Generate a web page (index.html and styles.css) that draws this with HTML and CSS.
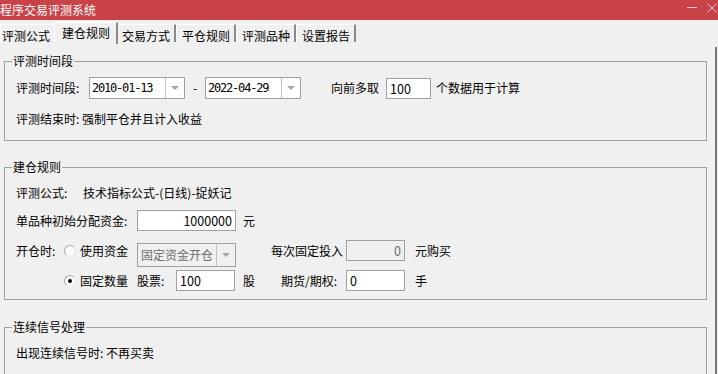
FILE: index.html
```html
<!DOCTYPE html>
<html lang="zh-CN">
<head>
  <meta charset="UTF-8" />
  <title>程序交易评测系统</title>
  <link rel="stylesheet" href="styles.css">
</head>
<body>
  <div class="titlebar">
    <span class="title">程序交易评测系统</span>
    <div class="controls">
      <svg width="10" height="10" viewBox="0 0 10 10"><line x1="0" y1="4.5" x2="10" y2="4.5" stroke="#f3c9cb" stroke-width="1"/></svg>
      <svg width="10" height="10" viewBox="0 0 10 10"><path d="M0.5 0.5 L9.5 9.5 M9.5 0.5 L0.5 9.5" stroke="#f3c9cb" stroke-width="1" fill="none"/></svg>
    </div>
  </div>

  <div class="tabs">
    <span class="tab first">评测公式</span>
    <span class="tab active">建仓规则</span>
    <span class="tab">交易方式</span>
    <span class="tab">平仓规则</span>
    <span class="tab">评测品种</span>
    <span class="tab">设置报告</span>
  </div>

  <div class="page">
    <!-- 评测时间段 -->
    <fieldset class="group g-time">
      <legend>评测时间段</legend>
      <div class="row">
        <span class="w-time">评测时间段:</span>
        <div class="combo date"><span class="val">2010-01-13</span><span class="drop"></span></div>
        <span class="dash">-</span>
        <div class="combo date"><span class="val">2022-04-29</span><span class="drop"></span></div>
        <span class="pre">向前多取</span>
        <div class="edit w-pre">100</div>
        <span class="after">个数据用于计算</span>
      </div>
      <div class="note">评测结束时: 强制平仓并且计入收益</div>
    </fieldset>

    <!-- 建仓规则 -->
    <fieldset class="group g-open">
      <legend>建仓规则</legend>
      <div class="line">
        <span class="w-formula">评测公式:</span>
        <span>技术指标公式-(日线)-捉妖记</span>
      </div>
      <div class="row r-fund">
        <span class="w-fund">单品种初始分配资金:</span>
        <div class="edit w-money right">1000000</div>
        <span class="unit">元</span>
      </div>
      <div class="row r-mode">
        <span class="w-open nudge">开仓时:</span>
        <label class="opt nudge"><span class="radio"></span>使用资金</label>
        <div class="combo off w-money mode"><span class="val">固定资金开仓</span><span class="drop"></span></div>
        <span class="w-fixed nudge">每次固定投入</span>
        <div class="edit off w-qty right">0</div>
        <span class="unit2 nudge">元购买</span>
      </div>
      <div class="row r-qty">
        <label class="opt"><span class="radio on"></span>固定数量</label>
        <span class="w-stock">股票:</span>
        <div class="edit w-qty">100</div>
        <span class="unit w-gu">股</span>
        <span class="w-fut">期货/期权:</span>
        <div class="edit w-qty">0</div>
        <span class="unit2">手</span>
      </div>
    </fieldset>

    <!-- 连续信号处理 -->
    <fieldset class="group g-signal">
      <legend>连续信号处理</legend>
      <div class="line">出现连续信号时: 不再买卖</div>
    </fieldset>
  </div>
</body>
</html>
```

FILE: styles.css
```css
body {
  margin: 0;
  width: 718px;
  height: 374px;
  overflow: hidden;
  background: #f0f0f0;
  color: #000;
  font-family: "Noto Sans CJK SC", "Noto Sans", sans-serif;
  font-size: 12px;
  line-height: 16px;
}

/* title bar */
.titlebar {
  height: 20px;
  background: #c84248;
  color: #fff;
  display: flex;
  justify-content: space-between;
  align-items: flex-start;
}

.title {
  line-height: 19px;
}

.controls {
  display: flex;
  gap: 10px;
  padding: 3px 1px 0 0;
}

.controls svg {
  display: block;
}

/* tabs */
.tabs {
  height: 27px;
  box-sizing: border-box;
  padding-top: 4px;
  display: flex;
  align-items: flex-start;
}

.tab {
  box-sizing: border-box;
  height: 18px;
  padding: 3px 4px 0 5px;
  border-left: 1px solid #fff;
  border-top: 1px solid #fff;
  border-right: 2px solid #8a8a8a;
  white-space: nowrap;
}

.tab.first {
  padding-left: 1px;
}

.tab.active {
  position: relative;
  z-index: 1;
  height: 22px;
  margin: -2px -2px 0;
  padding: 2px 6px 0 7px;
  background: #f0f0f0;
}

/* page */
.page {
  width: 717px;
  height: 327px;
  box-sizing: border-box;
  border-right: 2px solid #767676;
  overflow: hidden;
}

.group {
  width: 703px;
  box-sizing: border-box;
  margin: 0 0 0 4px;
  border: 1px solid #a0a0a0;
  min-width: 0;
}

.group legend {
  margin-left: -4px;
  padding: 0 1px;
  line-height: 16px;
}

.g-time {
  margin-top: 6px;
  padding: 8px 0 13px 11px;
}

.g-open {
  margin-top: 18px;
  padding: 10px 0 8px 11px;
}

.g-signal {
  margin-top: 19px;
  padding: 10px 0 30px 11px;
}

.row,
.line {
  display: flex;
  align-items: center;
  white-space: nowrap;
}

.note {
  margin-top: 12px;
}

/* inputs */
.combo {
  display: flex;
  box-sizing: border-box;
  height: 22px;
  border: 1px solid #a0a0a0;
  background: #fff;
}

.combo .val {
  flex: 1;
  padding-left: 2px;
  line-height: 20px;
}

.combo .drop {
  width: 18px;
  border-left: 1px solid #c4c4c4;
  display: flex;
  align-items: center;
  justify-content: center;
}

.combo .drop::before {
  content: "";
  border-left: 4px solid transparent;
  border-right: 4px solid transparent;
  border-top: 4px solid #a6a6a6;
}

.date {
  width: 96px;
}

.date .val {
  font-family: "DejaVu Sans Mono", monospace;
  font-size: 12px;
  letter-spacing: -1.2px;
}

.edit {
  box-sizing: border-box;
  height: 21px;
  border: 1px solid #a0a0a0;
  background: #fff;
  padding: 0 3px;
  line-height: 19px;
  font-size: 12.5px;
}

.edit.right {
  text-align: right;
}

.off,
.combo.off {
  background: #f0f0f0;
  color: #6d6d6d;
}

.w-time { width: 73px; }
.dash { width: 20px; text-align: center; }
.pre { margin-left: 30px; width: 55px; }
.w-pre { width: 45px; }
.after { margin-left: 5px; }

/* 建仓规则 */
.w-formula { width: 67px; }
.r-fund { margin-top: 9px; }
.w-fund { width: 121px; }
.w-money { width: 99px; }
.unit { margin-left: 7px; }
.unit2 { margin-left: 10px; }

.r-mode {
  margin-top: 9px;
  align-items: flex-start;
}

.nudge { margin-top: 3px; }
.w-open { width: 48px; }

.opt {
  width: 73px;
  display: flex;
  align-items: center;
  gap: 4px;
}

.radio {
  width: 12px;
  height: 12px;
  box-sizing: border-box;
  border-radius: 50%;
  border: 1px solid #a8a8a8;
  border-right-color: #e6e6e6;
  border-bottom-color: #e6e6e6;
  background: #fafafa;
  display: flex;
  align-items: center;
  justify-content: center;
}

.radio.on::before {
  content: "";
  width: 4px;
  height: 4px;
  border-radius: 50%;
  background: #000;
}

.mode {
  height: 24px;
  margin-top: 3px;
}

.mode .val {
  padding-left: 3px;
  line-height: 22px;
}

.w-fixed { margin-left: 35px; width: 75px; }
.w-qty { width: 59px; }

.r-qty {
  margin-top: 3px;
  padding-left: 48px;
}

.w-stock { width: 39px; }
.w-gu { margin-left: 8px; width: 38px; }
.w-fut { width: 65px; }
```
